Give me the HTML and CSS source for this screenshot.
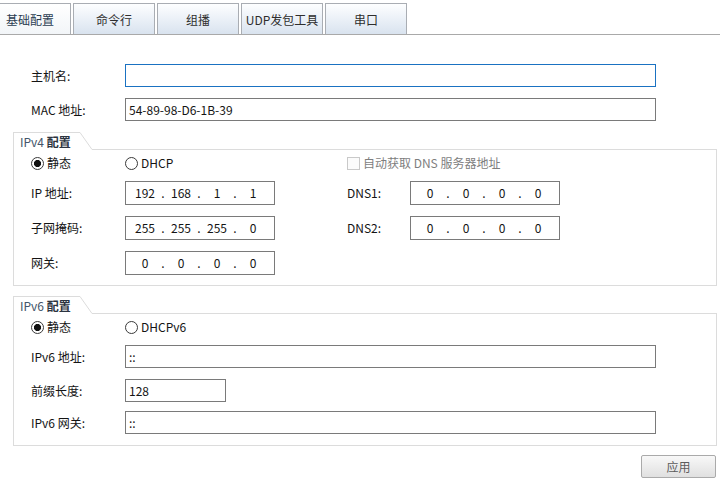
FILE: index.html
```html
<!DOCTYPE html>
<html lang="zh-CN">
<head>
<meta charset="utf-8">
<title>基础配置</title>
<link rel="stylesheet" href="styles.css">
</head>
<body>
<div class="tabs">
  <div class="tab active">基础配置</div>
  <div class="tab">命令行</div>
  <div class="tab">组播</div>
  <div class="tab">UDP发包工具</div>
  <div class="tab">串口</div>
</div>
<div class="content">
  <div class="field-row first">
    <span class="lbl">主机名:</span>
    <div class="input wide focus"></div>
  </div>
  <div class="field-row">
    <span class="lbl">MAC 地址:</span>
    <div class="input wide">54-89-98-D6-1B-39</div>
  </div>

  <div class="group">
    <div class="group-head">
      <div class="group-title">IPv4 <b>配置</b></div>
      <svg class="slant" width="12" height="18" viewBox="0 0 12 18"><line x1="0" y1="0.5" x2="12" y2="17.5" stroke="#dcdcdc" stroke-width="1"/></svg>
      <div class="group-fill"></div>
    </div>
    <div class="group-body v4">
      <div class="row opt">
        <div class="c1"><span class="radio on"></span>静态</div>
        <div class="c2"><span class="radio"></span>DHCP</div>
        <div class="c34 muted"><span class="check"></span>自动获取 DNS 服务器地址</div>
      </div>
      <div class="row in r1">
        <div class="c1">IP 地址:</div>
        <div class="c2"><div class="ip"><span class="oct">192</span><span class="dot">.</span><span class="oct">168</span><span class="dot">.</span><span class="oct">1</span><span class="dot">.</span><span class="oct">1</span></div></div>
        <div class="c3">DNS1:</div>
        <div class="c4"><div class="ip"><span class="oct">0</span><span class="dot">.</span><span class="oct">0</span><span class="dot">.</span><span class="oct">0</span><span class="dot">.</span><span class="oct">0</span></div></div>
      </div>
      <div class="row in">
        <div class="c1">子网掩码:</div>
        <div class="c2"><div class="ip"><span class="oct">255</span><span class="dot">.</span><span class="oct">255</span><span class="dot">.</span><span class="oct">255</span><span class="dot">.</span><span class="oct">0</span></div></div>
        <div class="c3">DNS2:</div>
        <div class="c4"><div class="ip"><span class="oct">0</span><span class="dot">.</span><span class="oct">0</span><span class="dot">.</span><span class="oct">0</span><span class="dot">.</span><span class="oct">0</span></div></div>
      </div>
      <div class="row in">
        <div class="c1">网关:</div>
        <div class="c2"><div class="ip"><span class="oct">0</span><span class="dot">.</span><span class="oct">0</span><span class="dot">.</span><span class="oct">0</span><span class="dot">.</span><span class="oct">0</span></div></div>
      </div>
    </div>
  </div>

  <div class="group g6">
    <div class="group-head">
      <div class="group-title">IPv6 <b>配置</b></div>
      <svg class="slant" width="12" height="18" viewBox="0 0 12 18"><line x1="0" y1="0.5" x2="12" y2="17.5" stroke="#dcdcdc" stroke-width="1"/></svg>
      <div class="group-fill"></div>
    </div>
    <div class="group-body v6">
      <div class="row opt">
        <div class="c1"><span class="radio on"></span>静态</div>
        <div class="c2"><span class="radio"></span>DHCPv6</div>
      </div>
      <div class="row in6 s1">
        <div class="c1">IPv6 地址:</div>
        <div class="input wide">::</div>
      </div>
      <div class="row in6 s2">
        <div class="c1">前缀长度:</div>
        <div class="input prefix">128</div>
      </div>
      <div class="row in6 s3">
        <div class="c1">IPv6 网关:</div>
        <div class="input wide">::</div>
      </div>
    </div>
  </div>

  <div class="actions">
    <div class="btn">应用</div>
  </div>
</div>
</body>
</html>
```

FILE: styles.css
```css
* { box-sizing: border-box; }
html, body { margin: 0; padding: 0; background: #fff; }
body {
  width: 720px;
  height: 489px;
  overflow: hidden;
  font-family: "Noto Sans CJK SC", "Noto Sans", sans-serif;
  font-size: 12px;
  color: #141414;
  line-height: 16px;
}

/* tabs */
.tabs {
  display: flex;
  gap: 2px;
  margin-left: -11px;
  padding-top: 3px;
  border-bottom: 1px solid #a9a9a9;
}
.tab {
  width: 82px;
  height: 31px;
  border: 1px solid #a9adb3;
  border-bottom: none;
  background: linear-gradient(#fdfeff, #d9e3ef);
  text-align: center;
  line-height: 28px;
  padding-top: 2px;
  color: #2e2e2e;
  flex: none;
}
.tab.active {
  background: linear-gradient(#ffffff, #f2f5f8);
  color: #2b3d52;
}

/* content */
.content { padding: 0 3px 0 13px; }
.field-row {
  display: flex;
  align-items: center;
  padding-left: 18px;
  margin-top: 11px;
}
.field-row.first { margin-top: 29px; }
.lbl { width: 94px; flex: none; }

.input {
  height: 23px;
  border: 1px solid #7a7a7a;
  padding-left: 3px;
  line-height: 21px;
  background: #fff;
  flex: none;
}
.input.wide { width: 531px; }
.input.prefix { width: 101px; }
.input.focus { border-color: #1a72c2; }

/* group boxes */
.group { margin-top: 11px; }
.group.g6 { margin-top: 10px; }
.group-head { display: flex; height: 18px; }
.group-title {
  width: 67px;
  border-top: 1px solid #dcdcdc;
  border-left: 1px solid #dcdcdc;
  padding-left: 6px;
  line-height: 17px;
  color: #44566a;
  flex: none;
}
.group-title b { color: #2c3440; font-weight: 700; }
.slant { display: block; flex: none; }
.group-fill { flex: 1; border-bottom: 1px solid #dcdcdc; }
.group-body {
  border: 1px solid #dcdcdc;
  border-top: none;
  padding: 5px 0 10px 17px;
}
.group-body.v6 { padding-bottom: 11px; }

.row { display: flex; align-items: center; }
.row.opt { height: 16px; }
.row.in { height: 24px; margin-top: 11px; }
.row.in.r1 { margin-top: 10px; }
.row.in6 { height: 23px; }
.row.s1 { margin-top: 10px; }
.row.s2 { margin-top: 11px; }
.row.s3 { margin-top: 9px; }

.c1 { width: 94px; flex: none; display: flex; align-items: center; }
.c2 { width: 222px; flex: none; display: flex; align-items: center; }
.c3 { width: 63px; flex: none; }
.c4 { flex: none; }
.c34 { display: flex; align-items: center; }
.muted { color: #7e7e7e; }

.radio {
  width: 13px;
  height: 13px;
  border: 1px solid #3a3a3a;
  border-radius: 50%;
  margin-right: 3px;
  flex: none;
  background: #fff;
}
.radio.on { background: radial-gradient(circle, #111 3.2px, #fff 3.9px); }
.check {
  width: 13px;
  height: 13px;
  border: 1px solid #c9c9c9;
  background: #fbfbfb;
  margin-right: 3px;
  flex: none;
}

.ip {
  width: 150px;
  height: 24px;
  border: 1px solid #7a7a7a;
  padding-left: 5px;
  display: flex;
  align-items: center;
  background: #fff;
}
.ip .oct { width: 28px; text-align: center; }
.ip .dot { width: 8px; text-align: center; }

/* actions */
.actions {
  display: flex;
  justify-content: flex-end;
  margin-top: 9px;
  padding-right: 1px;
}
.btn {
  width: 75px;
  height: 23px;
  border: 1px solid #aaaaaa;
  border-radius: 2px;
  background: linear-gradient(#f8f8f8, #e0e0e0);
  color: #5c5c5c;
  text-align: center;
  line-height: 21px;
}
```
